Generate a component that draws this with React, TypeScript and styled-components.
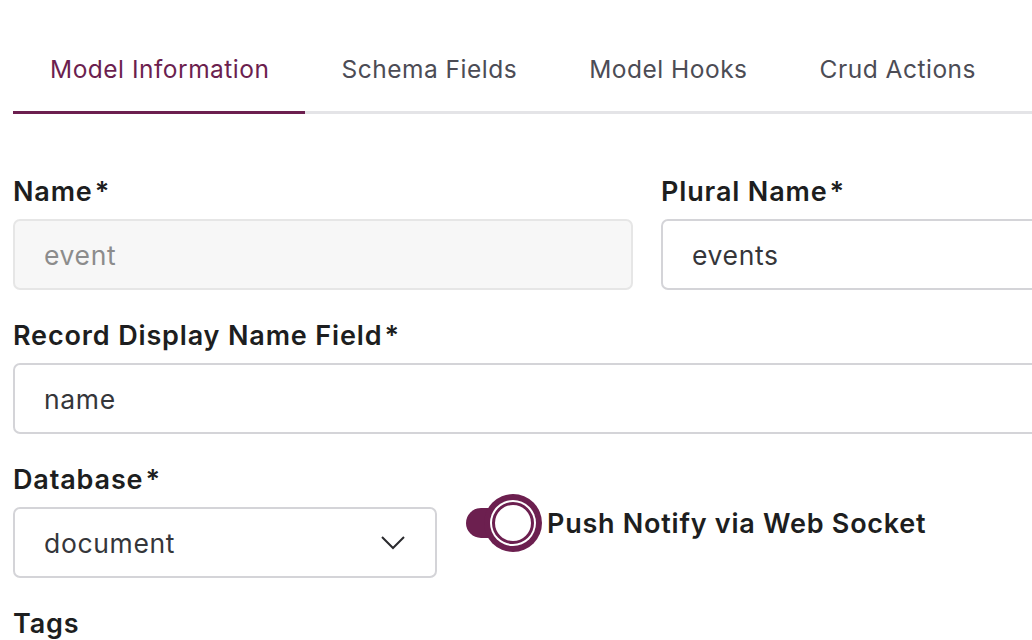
import styled, { createGlobalStyle } from 'styled-components';

const GlobalStyle = createGlobalStyle`
    html, body {
        margin: 0;
        padding: 0;
        background: #ffffff;
        overflow: hidden;
    }
    body {
        font-family: Inter, "Noto Sans", sans-serif;
        color: #1d1e20;
    }
`;

const PURPLE = '#6c1f4f';

const Page = styled.div`
    width: 1268px;
    padding: 29px 0 0 13px;
`;

const TabList = styled.div`
    display: flex;
    border-bottom: 3px solid #e4e4e7;
`;

const Tab = styled.div<{ $active?: boolean }>`
    padding: 24px 36px 26px 36px;
    margin-bottom: -3px;
    font-size: 24.5px;
    line-height: 32px;
    letter-spacing: 0.5px;
    color: ${(p) => (p.$active ? PURPLE : '#4c4c55')};
    border-bottom: 3px solid ${(p) => (p.$active ? PURPLE : 'transparent')};

    &:first-child {
        padding-left: 37px;
    }
`;

const Form = styled.div`
    padding-top: 61px;
    display: flex;
    flex-direction: column;
    gap: 29px;
`;

const Row = styled.div`
    display: grid;
    grid-template-columns: 620px 620px;
    column-gap: 28px;
`;

const InlineRow = styled.div`
    display: flex;
    align-items: flex-start;
    gap: 29px;
`;

const Field = styled.div<{ $width?: number }>`
    display: flex;
    flex-direction: column;
    width: ${(p) => (p.$width ? `${p.$width}px` : 'auto')};
`;

const Label = styled.label`
    font-size: 27px;
    font-weight: 600;
    line-height: 34px;
    margin-bottom: 10px;
    color: #1d1e20;
    letter-spacing: 0.85px;

    span {
        margin-left: 2px;
    }
`;

const Input = styled.div<{ $disabled?: boolean }>`
    box-sizing: border-box;
    height: 71px;
    border-radius: 7px;
    border: 2px solid ${(p) => (p.$disabled ? '#e6e6e6' : '#d4d4d8')};
    background: ${(p) => (p.$disabled ? '#f7f7f7' : '#ffffff')};
    padding: 0 29px;
    display: flex;
    align-items: center;
    justify-content: space-between;
    font-size: 26.5px;
    letter-spacing: 0.65px;
    color: ${(p) => (p.$disabled ? '#8c8c8c' : '#35363a')};
`;

const ToggleWrap = styled.div`
    display: flex;
    align-items: center;
    margin-top: 31px;
    height: 58px;
`;

const Track = styled.div`
    position: relative;
    width: 64px;
    height: 30px;
    border-radius: 15px;
    background: ${PURPLE};
`;

const Knob = styled.div`
    position: absolute;
    right: -4px;
    top: 50%;
    transform: translateY(-50%);
    box-sizing: border-box;
    width: 42px;
    height: 42px;
    border-radius: 50%;
    background: #ffffff;
    border: 3px solid ${PURPLE};
    box-shadow: 0 0 0 2px #ffffff, 0 0 0 8px ${PURPLE};
`;

const ToggleText = styled.span`
    margin-left: 17px;
    font-size: 27px;
    font-weight: 600;
    letter-spacing: 0.75px;
    color: #1d1e20;
`;

function Chevron() {
    return (
        <svg width="26" height="16" viewBox="0 0 26 16" fill="none">
            <path d="M2 2 L13 13 L24 2" stroke="#2a2a2e" strokeWidth="2" />
        </svg>
    );
}

function App() {
    return (
        <>
            <GlobalStyle />
            <Page>
                <TabList>
                    <Tab $active>Model Information</Tab>
                    <Tab>Schema Fields</Tab>
                    <Tab>Model Hooks</Tab>
                    <Tab>Crud Actions</Tab>
                </TabList>
                <Form>
                    <Row>
                        <Field>
                            <Label>
                                Name<span>*</span>
                            </Label>
                            <Input $disabled>event</Input>
                        </Field>
                        <Field>
                            <Label>
                                Plural Name<span>*</span>
                            </Label>
                            <Input>events</Input>
                        </Field>
                    </Row>
                    <Field>
                        <Label>
                            Record Display Name Field<span>*</span>
                        </Label>
                        <Input>name</Input>
                    </Field>
                    <InlineRow>
                        <Field $width={424}>
                            <Label>
                                Database<span>*</span>
                            </Label>
                            <Input>
                                document
                                <Chevron />
                            </Input>
                        </Field>
                        <ToggleWrap>
                            <Track>
                                <Knob />
                            </Track>
                            <ToggleText>Push Notify via Web Socket</ToggleText>
                        </ToggleWrap>
                    </InlineRow>
                    <Field>
                        <Label>Tags</Label>
                    </Field>
                </Form>
            </Page>
        </>
    );
}

export default App;
